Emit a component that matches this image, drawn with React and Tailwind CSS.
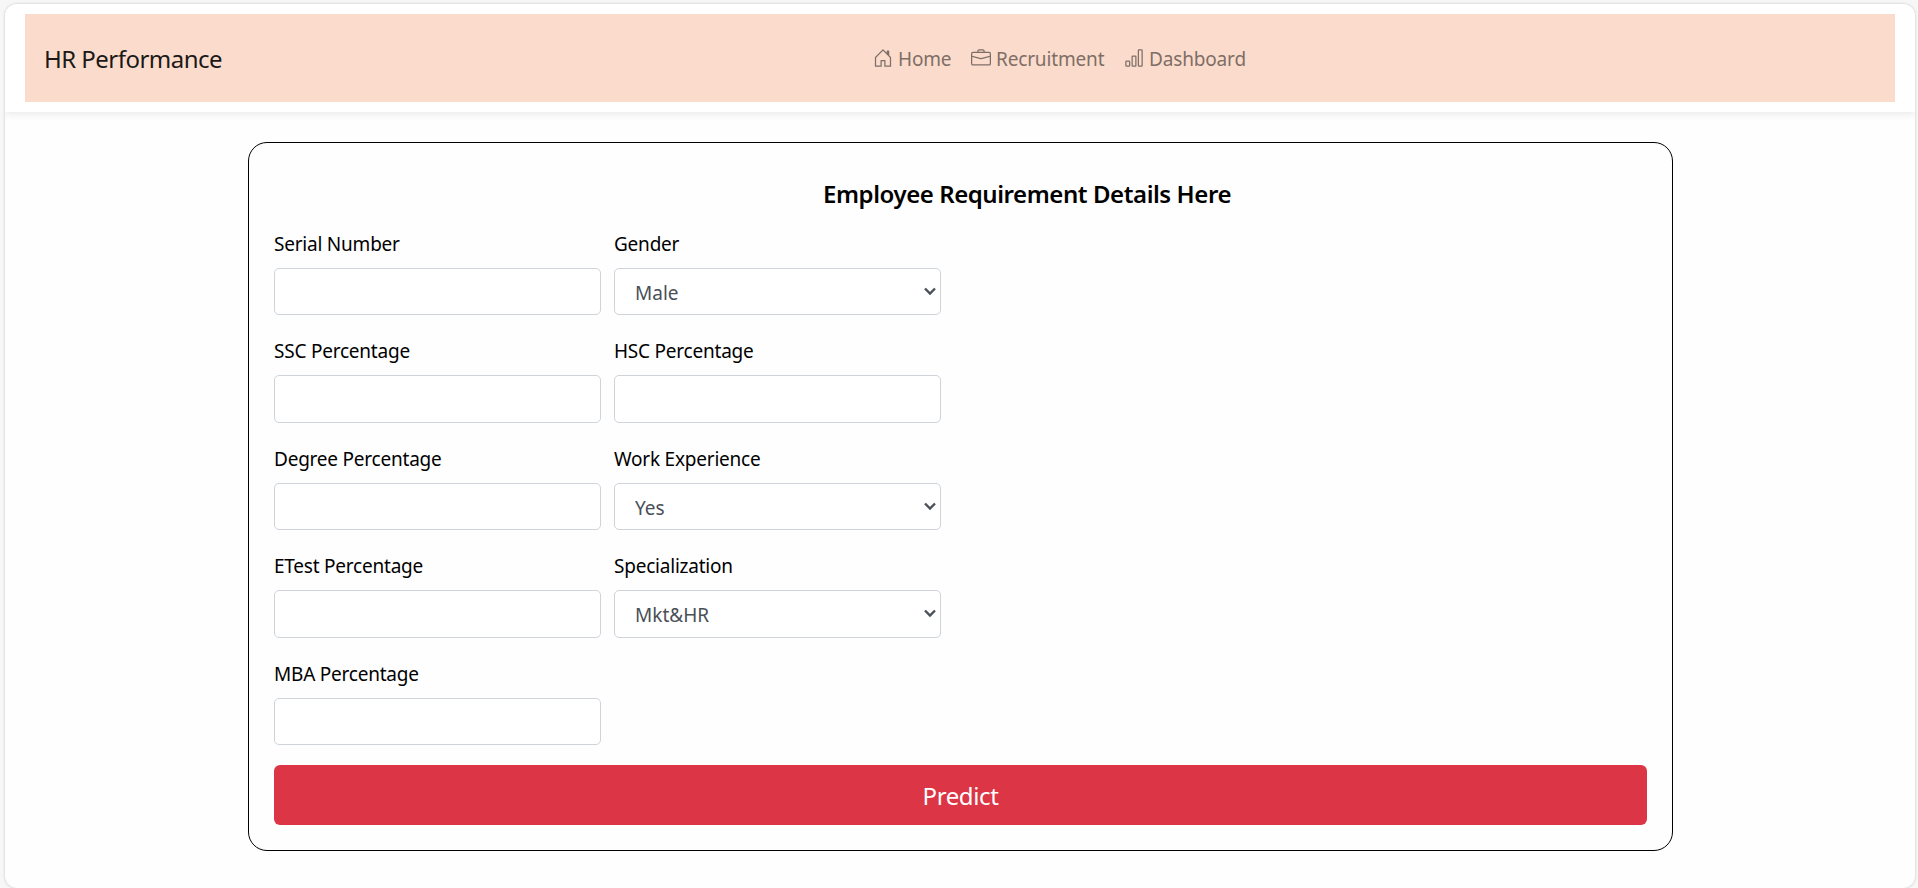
import { BsHouseDoor, BsBriefcase, BsBarChart } from 'react-icons/bs';

const links = [
  { label: 'Home', Icon: BsHouseDoor, width: 'w-[78px]' },
  { label: 'Recruitment', Icon: BsBriefcase, width: 'w-[133px]' },
  { label: 'Dashboard', Icon: BsBarChart, width: 'w-[122px]' },
];

const fields = [
  { label: 'Serial Number' },
  { label: 'Gender', options: ['Male', 'Female'] },
  { label: 'SSC Percentage' },
  { label: 'HSC Percentage' },
  { label: 'Degree Percentage' },
  { label: 'Work Experience', options: ['Yes', 'No'] },
  { label: 'ETest Percentage' },
  { label: 'Specialization', options: ['Mkt&HR', 'Mkt&Fin'] },
  { label: 'MBA Percentage' },
];

const control =
  'block h-[47.4px] w-full rounded-[5px] border border-[#ced4da] bg-white text-[19px] text-[#495057]';

function Field({ label, options }) {
  return (
    <label className="flex h-[107.5px] flex-col text-[19px] text-black">
      <span className="mb-[9px] h-[30px] whitespace-nowrap leading-[30px] tracking-[-0.22px]">{label}</span>
      {options ? (
        <span className="relative block">
          <select className={`${control} appearance-none pl-5 pt-[3px] tracking-normal`}>
            {options.map((o) => (
              <option key={o}>{o}</option>
            ))}
          </select>
          <svg className="pointer-events-none absolute right-[5px] top-[19px] h-[9px] w-3" viewBox="0 0 12 9" fill="none" stroke="#495057" strokeWidth="2.4">
            <path d="M1 1.5 6 6.5 11 1.5" />
          </svg>
        </span>
      ) : (
        <input className={`${control} px-4`} />
      )}
    </label>
  );
}

export default function App() {
  return (
    <div className="h-[888px] overflow-hidden bg-[#f7f7f7] pl-[5px] pr-[3px] pt-1 font-['Noto_Sans','Open_Sans',sans-serif]">
      <div className="h-[884px] overflow-hidden rounded-[12px] bg-[#fefefe] shadow-[0_0_3px_rgba(0,0,0,0.22)]">
        <header className="h-[108px] bg-white px-5 py-2.5 shadow-[0_2px_8px_rgba(0,0,0,0.09)]">
          <nav className="flex h-[88px] items-center bg-[#fbdccc] pl-[19px]">
            <span className="w-[829px] whitespace-nowrap pt-px text-[24px] tracking-[-0.53px] text-[#1b1918]">HR Performance</span>
            <div className="flex gap-5">
              {links.map(({ label, Icon, width }) => (
                <a key={label} className={`flex items-center gap-[5px] whitespace-nowrap text-[19px] tracking-[-0.16px] text-[#7e6e66] ${width}`}>
                  <Icon className="size-5 shrink-0" />
                  <span className="pt-[2px]">{label}</span>
                </a>
              ))}
            </div>
          </nav>
        </header>
        <main className="ml-[243px] mt-[30px] h-[709px] w-[1425px] rounded-[19px] border border-black px-[25px] pt-[35px]">
          <h1 className="h-[50.9px] pl-[133px] text-center text-[24px] font-semibold leading-[32px] tracking-[-0.43px] text-black">Employee Requirement Details Here</h1>
          <form>
            <div className="-mb-[1.4px] grid w-[667px] grid-cols-2 gap-x-[13px]">
              {fields.map((f) => (
                <Field key={f.label} {...f} />
              ))}
            </div>
            <button type="button" className="block h-[60px] w-full rounded-md bg-[#dc3545] pt-0.5 text-[24px] tracking-[-0.4px] text-white">Predict</button>
          </form>
        </main>
      </div>
    </div>
  );
}
